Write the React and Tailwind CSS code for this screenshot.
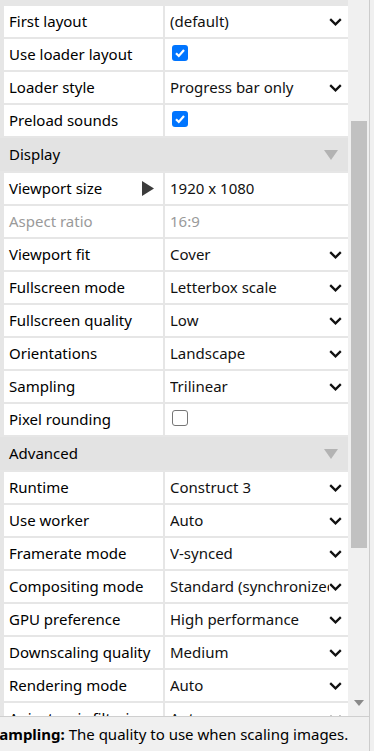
import React from "react";

const Chevron = () => (
  <svg width="13" height="8" viewBox="0 0 13 8" className="shrink-0">
    <path d="M1.2 1.2 L6.5 6.3 L11.8 1.2" fill="none" stroke="#111" strokeWidth="2.3" />
  </svg>
);

const Check = ({ on }) =>
  on ? (
    <div className="w-[16px] h-[16px] rounded-[3px] bg-[#0075ff] flex items-center justify-center">
      <svg width="12" height="12" viewBox="0 0 12 12">
        <path d="M2 6.2 L4.8 9 L10 3" fill="none" stroke="#fff" strokeWidth="2.2" />
      </svg>
    </div>
  ) : (
    <div className="w-[16px] h-[16px] rounded-[3px] border border-[#767676] bg-white" />
  );

const rows1 = [
  { l: "First layout", v: "(default)", sel: true },
  { l: "Use loader layout", chk: true },
  { l: "Loader style", v: "Progress bar only", sel: true },
  { l: "Preload sounds", chk: true },
];
const rows2 = [
  { l: "Viewport size", v: "1920 x 1080", tri: true },
  { l: "Aspect ratio", v: "16:9", dis: true },
  { l: "Viewport fit", v: "Cover", sel: true },
  { l: "Fullscreen mode", v: "Letterbox scale", sel: true },
  { l: "Fullscreen quality", v: "Low", sel: true },
  { l: "Orientations", v: "Landscape", sel: true },
  { l: "Sampling", v: "Trilinear", sel: true },
  { l: "Pixel rounding", chk: false },
];
const rows3 = [
  { l: "Runtime", v: "Construct 3", sel: true },
  { l: "Use worker", v: "Auto", sel: true },
  { l: "Framerate mode", v: "V-synced", sel: true },
  { l: "Compositing mode", v: "Standard (synchronized)", sel: true },
  { l: "GPU preference", v: "High performance", sel: true },
  { l: "Downscaling quality", v: "Medium", sel: true },
  { l: "Rendering mode", v: "Auto", sel: true },
  { l: "Anisotropic filtering", v: "Auto", sel: true },
];

const Row = ({ r }) => (
  <div className="flex h-[31px] shrink-0 gap-[2px]">
    <div
      className={`w-[159px] bg-white flex items-center justify-between pl-[5px] pr-[9px] ${
        r.dis ? "text-[#9a9a9a]" : "text-black"
      }`}
    >
      <span className="whitespace-nowrap">{r.l}</span>
      {r.tri && (
        <svg width="12" height="15" viewBox="0 0 12 15">
          <path d="M0 0 L12 7.5 L0 15 Z" fill="#3c3c3c" />
        </svg>
      )}
    </div>
    <div className="flex-1 min-w-0 bg-white flex items-center pl-[5px] pr-[6px]">
      {r.chk !== undefined ? (
        <div className="pl-[2px] -mt-[3px]">
          <Check on={r.chk} />
        </div>
      ) : (
        <>
          <span
            className={`flex-1 min-w-0 overflow-hidden whitespace-nowrap ${
              r.dis ? "text-[#9a9a9a]" : "text-[#111]"
            }`}
          >
            {r.v}
          </span>
          {r.sel && <Chevron />}
        </>
      )}
    </div>
  </div>
);

const Header = ({ t }) => (
  <div className="flex h-[33px] shrink-0 items-center justify-between pl-[9px] pr-[10px] -ml-[4px] bg-[#e3e3e3]">
    <span className="text-black">{t}</span>
    <svg width="14" height="10" viewBox="0 0 14 10">
      <path d="M0 0 L14 0 L7 10 Z" fill="#b3b3b3" />
    </svg>
  </div>
);

export default function App() {
  return (
    <div
      className="w-[374px] h-[751px] flex overflow-hidden bg-[#f0f0f0] text-[15px]"
      style={{ fontFamily: '"Noto Sans", "Open Sans", sans-serif' }}
    >
      <div className="flex-1 flex flex-col min-w-0">
        <div className="flex-1 flex min-h-0">
          <div className="w-[348px] bg-[#e6e6e6] pl-[4px] pt-[6px] flex flex-col gap-[2px] overflow-hidden">
            {rows1.map((r) => (
              <Row key={r.l} r={r} />
            ))}
            <Header t="Display" />
            {rows2.map((r) => (
              <Row key={r.l} r={r} />
            ))}
            <Header t="Advanced" />
            {rows3.map((r) => (
              <Row key={r.l} r={r} />
            ))}
          </div>
          <div className="flex-1 bg-[#f0f0f0] flex flex-col items-center pt-[121px] relative">
            <div className="w-[16px] h-[427px] bg-[#c1c1c1] ml-[1px]" />
            <svg
              width="10"
              height="6"
              viewBox="0 0 10 6"
              className="absolute left-[6px] top-[700px]"
            >
              <path d="M0 0 L10 0 L5 6 Z" fill="#8a8a8a" />
            </svg>
          </div>
        </div>
        <div className="h-[35px] shrink-0 border-t border-[#cfcfcf] bg-[#f0f0f0] flex items-center overflow-hidden">
          <span className="whitespace-nowrap -ml-[9px] text-black">
            <b>Sampling:</b> The quality to use when scaling images.
          </span>
        </div>
      </div>
      <div className="w-[5px] border-l border-[#cccccc] bg-[#f0f0f0]" />
    </div>
  );
}
